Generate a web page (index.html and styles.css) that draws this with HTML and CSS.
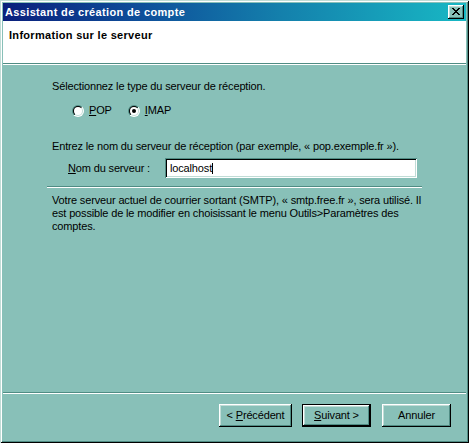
FILE: index.html
```html
<!DOCTYPE html>
<html lang="fr">
<head>
<meta charset="utf-8">
<title>Assistant de création de compte</title>
<link rel="stylesheet" href="styles.css">
</head>
<body>
<div class="window">
  <div class="titlebar">
    <span class="title">Assistant de création de compte</span>
    <div class="close">
      <svg width="8" height="7" viewBox="0 0 8 7" shape-rendering="crispEdges"><path fill="#000" d="M0 0h2v1H0z M6 0h2v1H6z M1 1h2v1H1z M5 1h2v1H5z M2 2h4v1H2z M3 3h2v1H3z M2 4h4v1H2z M1 5h2v1H1z M5 5h2v1H5z M0 6h2v1H0z M6 6h2v1H6z"/></svg>
    </div>
  </div>
  <div class="client">
    <div class="header">
      <div class="header-title">Information sur le serveur</div>
    </div>
    <div class="etched"></div>
    <div class="body">
      <p class="text first">Sélectionnez le type du serveur de réception.</p>
      <div class="radios">
        <label class="radio">
          <svg width="12" height="12" viewBox="0 0 12 12">
            <defs>
              <linearGradient id="ro" x1="0" y1="0" x2="1" y2="1"><stop offset="0.5" stop-color="#508c84"/><stop offset="0.5" stop-color="#ffffff"/></linearGradient>
              <linearGradient id="ri" x1="0" y1="0" x2="1" y2="1"><stop offset="0.5" stop-color="#000000"/><stop offset="0.5" stop-color="#c0dcd6"/></linearGradient>
            </defs>
            <circle cx="6" cy="6" r="6" fill="url(#ro)"/>
            <circle cx="6" cy="6" r="5" fill="url(#ri)"/>
            <circle cx="6" cy="6" r="4" fill="#fff"/>
          </svg>
          <span><u>P</u>OP</span>
        </label>
        <label class="radio">
          <svg width="12" height="12" viewBox="0 0 12 12">
            <circle cx="6" cy="6" r="6" fill="url(#ro)"/>
            <circle cx="6" cy="6" r="5" fill="url(#ri)"/>
            <circle cx="6" cy="6" r="4" fill="#fff"/>
            <circle cx="6" cy="6" r="2" fill="#000"/>
          </svg>
          <span><u>I</u>MAP</span>
        </label>
      </div>
      <p class="text enter">Entrez le nom du serveur de réception (par exemple, « pop.exemple.fr »).</p>
      <div class="field">
        <span class="field-label"><u>N</u>om du serveur :</span>
        <div class="input">localhost<span class="caret"></span></div>
      </div>
      <div class="etched sep"></div>
      <p class="text note">Votre serveur actuel de courrier sortant (SMTP), « smtp.free.fr », sera utilisé. Il<br>est possible de le modifier en choisissant le menu Outils&gt;Paramètres des<br>comptes.</p>
    </div>
    <div class="etched"></div>
    <div class="buttons">
      <button class="btn back"><span>&lt; <u>P</u>récédent</span></button>
      <button class="btn next default"><span><u>S</u>uivant &gt;</span></button>
      <button class="btn cancel"><span>Annuler</span></button>
    </div>
  </div>
</div>
</body>
</html>
```
FILE: styles.css
```css
* {
  box-sizing: border-box;
  margin: 0;
  padding: 0;
}

html, body {
  width: 469px;
  height: 443px;
  overflow: hidden;
}

body {
  font-family: "Liberation Sans", Arial, sans-serif;
  font-size: 11px;
  line-height: 13px;
  color: #000;
  background: #88c0b8;
}

.window {
  width: 469px;
  height: 443px;
  padding: 3px;
  background: #88c0b8;
  box-shadow: inset 1px 1px #c0dcd6, inset -1px -1px #000, inset 2px 2px #fff, inset -2px -2px #508c84;
  display: flex;
  flex-direction: column;
}

.titlebar {
  height: 18px;
  flex: none;
  background: linear-gradient(to right, #0a1f7c, #0e4f9a 30%, #1480ac 60%, #18b8c4);
  display: flex;
  align-items: center;
  justify-content: space-between;
  padding: 0 2px;
}

.title {
  color: #fff;
  font-weight: bold;
  letter-spacing: 0.35px;
  line-height: 18px;
  white-space: nowrap;
}

.close {
  width: 16px;
  height: 14px;
  background: #88c0b8;
  box-shadow: inset -1px -1px #000, inset 1px 1px #fff, inset -2px -2px #508c84, inset 2px 2px #c0dcd6;
  display: flex;
  align-items: center;
  justify-content: center;
  padding-bottom: 1px;
}

.close svg {
  display: block;
}

.client {
  flex: 1;
  display: flex;
  flex-direction: column;
}

.header {
  height: 42px;
  flex: none;
  background: #fff;
  padding: 8px 0 0 6px;
}

.header-title {
  font-weight: bold;
  letter-spacing: 0.3px;
  white-space: nowrap;
}

.etched {
  height: 2px;
  flex: none;
  border-top: 1px solid #508c84;
  border-bottom: 1px solid #fff;
}

.body {
  flex: 1;
  padding: 15px 0 0 44px;
}

.text {
  padding-left: 5px;
  letter-spacing: -0.15px;
  white-space: nowrap;
}

.radios {
  display: flex;
  gap: 16px;
  margin-top: 11px;
  padding-left: 25px;
  height: 13px;
}

.radio {
  display: flex;
  align-items: center;
  gap: 5px;
  letter-spacing: -0.15px;
}

.radio svg {
  flex: none;
  display: block;
}

.enter {
  margin-top: 23px;
}

.field {
  display: flex;
  align-items: center;
  margin-top: 5px;
  padding-left: 21px;
}

.field-label {
  width: 97px;
  flex: none;
  letter-spacing: -0.15px;
  white-space: nowrap;
}

.input {
  width: 252px;
  height: 20px;
  background: #fff;
  padding: 4px 5px 0;
  letter-spacing: -0.15px;
  box-shadow: inset 1px 1px #508c84, inset -1px -1px #fff, inset 2px 2px #000, inset -2px -2px #c0dcd6;
}

.caret {
  display: inline-block;
  width: 1px;
  height: 11px;
  background: #000;
  vertical-align: -2px;
}

.sep {
  width: 375px;
  margin-top: 8px;
}

.note {
  margin-top: 6px;
}

.buttons {
  flex: none;
  display: flex;
  justify-content: flex-end;
  padding: 10px 15px 13px 0;
}

.btn {
  height: 23px;
  font: inherit;
  color: #000;
  border: 0;
  background: #88c0b8;
  box-shadow: inset -1px -1px #000, inset 1px 1px #fff, inset -2px -2px #508c84, inset 2px 2px #c0dcd6;
  display: flex;
  align-items: center;
  justify-content: center;
  letter-spacing: -0.15px;
  white-space: nowrap;
}

.back {
  width: 73px;
  margin-right: 10px;
}

.next {
  width: 69px;
  margin-right: 11px;
}

.cancel {
  width: 69px;
}

.default {
  border: 1px solid #000;
}
```
